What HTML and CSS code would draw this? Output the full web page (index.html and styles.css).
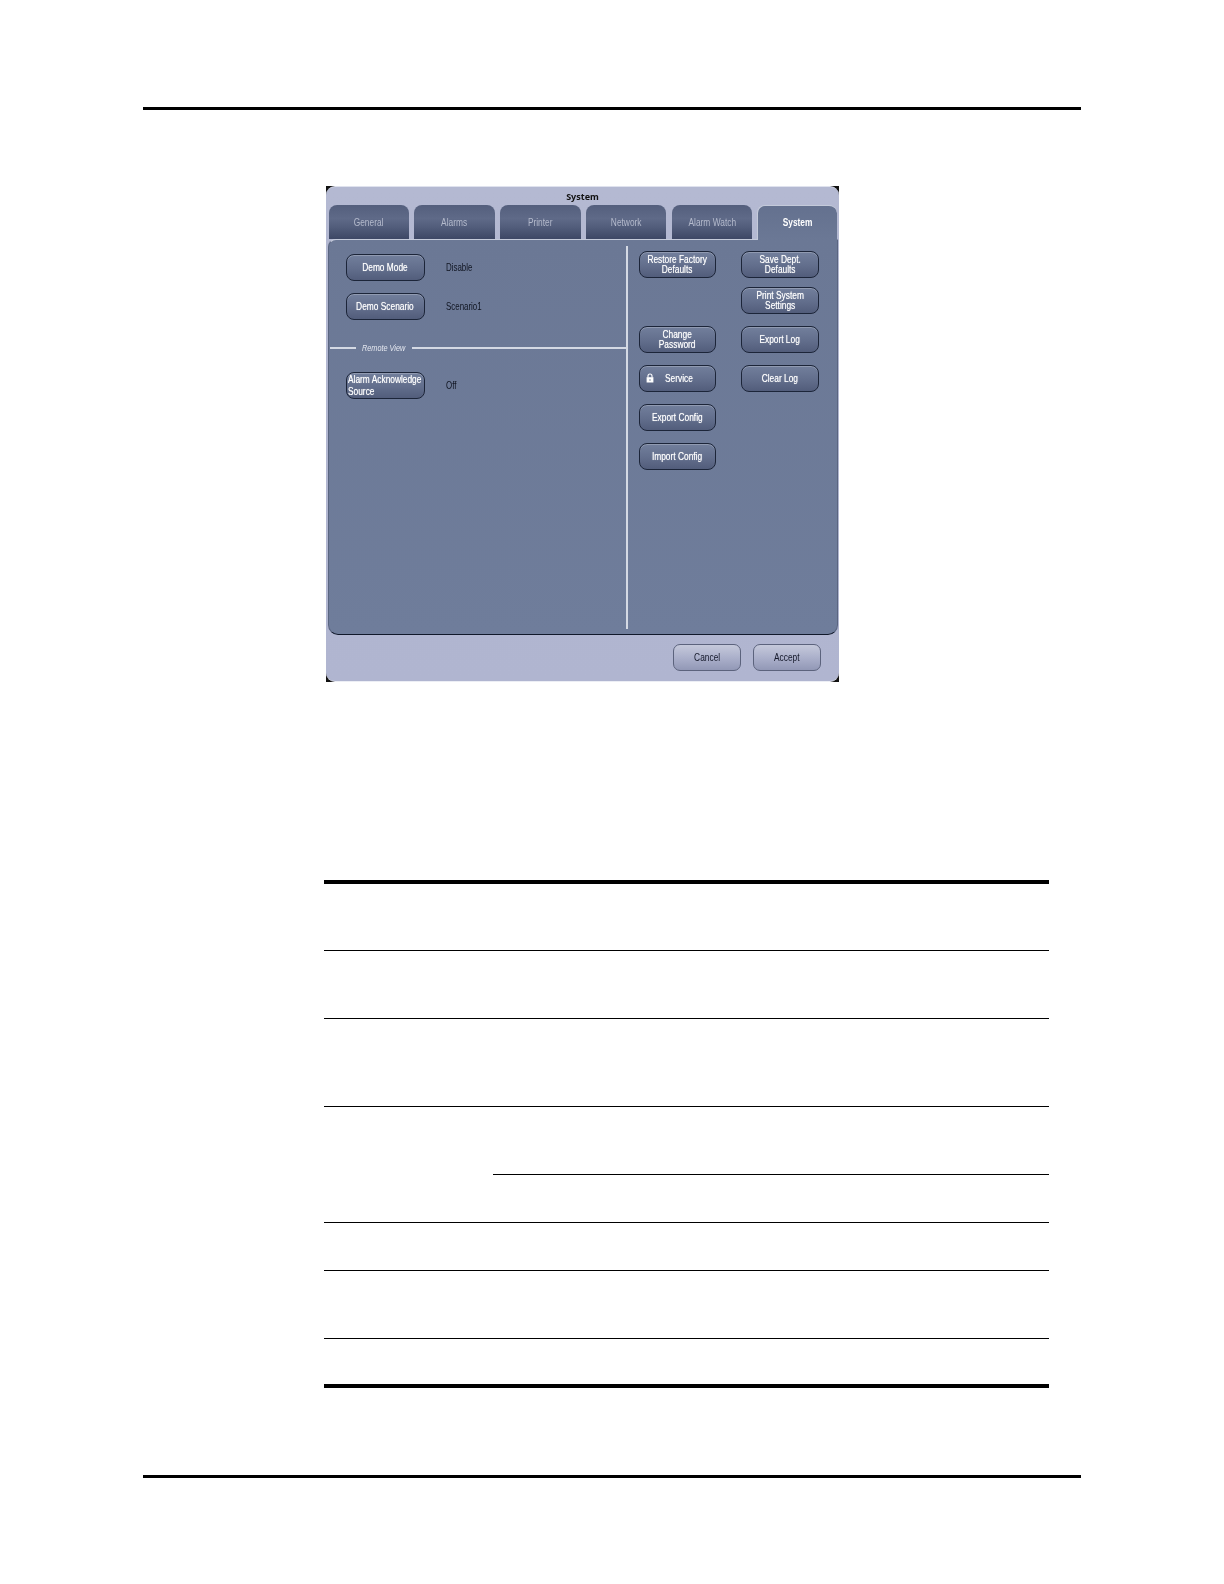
FILE: index.html
```html
<!DOCTYPE html>
<html lang="en">
<head>
  <meta charset="UTF-8">
  <title>System</title>
  <link rel="stylesheet" href="styles.css">
</head>
<body>
  <div class="page">
    <div class="page-rule"></div>
    <div class="dialog">
      <div class="dialog-inner">
        <div class="title">System</div>
        <div class="tabs">
          <div class="tab"><span class="lbl">General</span></div>
          <div class="tab"><span class="lbl">Alarms</span></div>
          <div class="tab"><span class="lbl">Printer</span></div>
          <div class="tab"><span class="lbl">Network</span></div>
          <div class="tab"><span class="lbl">Alarm Watch</span></div>
          <div class="tab active"><span class="lbl">System</span></div>
        </div>
        <div class="panel">
          <div class="left">
            <div class="setting">
              <button class="btn wide"><span class="lbl">Demo Mode</span></button>
              <span class="value">Disable</span>
            </div>
            <div class="setting">
              <button class="btn wide"><span class="lbl">Demo Scenario</span></button>
              <span class="value">Scenario1</span>
            </div>
            <div class="group-line"><span>Remote View</span></div>
            <div class="setting">
              <button class="btn wide left-text"><span class="lbl">Alarm Acknowledge<br>Source</span></button>
              <span class="value">Off</span>
            </div>
          </div>
          <div class="divider"></div>
          <div class="right">
            <div class="col">
              <button class="btn"><span class="lbl">Restore Factory<br>Defaults</span></button>
              <button class="btn gap-change"><span class="lbl">Change<br>Password</span></button>
              <button class="btn service">
                <svg class="lock" viewBox="0 0 8 10" width="8" height="10"><path d="M2 4.5V3a2 2 0 0 1 4 0v1.5" fill="none" stroke="#fff" stroke-width="1.1"/><path d="M.6 4.2h6.8v5.3H.6z" fill="#fff"/><path d="M3.6 6h.8v2h-.8z" fill="#6c7a96"/></svg>
                <span class="lbl">Service</span>
              </button>
              <button class="btn"><span class="lbl">Export Config</span></button>
              <button class="btn"><span class="lbl">Import Config</span></button>
            </div>
            <div class="col col-wide">
              <button class="btn"><span class="lbl">Save Dept.<br>Defaults</span></button>
              <button class="btn gap-print"><span class="lbl">Print System<br>Settings</span></button>
              <button class="btn"><span class="lbl">Export Log</span></button>
              <button class="btn"><span class="lbl">Clear Log</span></button>
            </div>
          </div>
        </div>
        <div class="footer">
          <button class="btn-light"><span class="lbl">Cancel</span></button>
          <button class="btn-light"><span class="lbl">Accept</span></button>
        </div>
      </div>
    </div>
    <div class="table">
      <div class="row r1"></div>
      <div class="row r2"></div>
      <div class="row r3"></div>
      <div class="row r4">
        <div class="sub"></div>
      </div>
      <div class="row r5"></div>
      <div class="row r6"></div>
      <div class="row r7"></div>
    </div>
    <div class="page-rule bottom"></div>
  </div>
</body>
</html>
```

FILE: styles.css
```css
body { background: #fff; margin: 0; font-family: "Liberation Sans", Arial, sans-serif; }
.page { width: 938px; margin-left: 143px; padding-top: 107px; }
.page-rule { height: 3px; background: #000; }
.page-rule.bottom { margin-top: 87px; }

/* condensed look of the device font */
.lbl { display: block; white-space: nowrap; transform: scaleX(.76); }

.dialog { width: 513px; height: 496px; margin: 76px 0 0 183px; background: #111; }
.dialog-inner { height: 100%; background: linear-gradient(#b4b9d2, #b0b5d0); border-radius: 9px; display: flex; flex-direction: column; box-sizing: border-box; padding: 0 1.5px 0 1.5px; border-top: 1px solid #dfe2ee; border-bottom: 1px solid #eceef5; filter: blur(.3px); }
.title { height: 18px; flex: none; text-align: center; font: bold 9px/19px "Noto Sans", sans-serif; color: #111; }

.tabs { display: flex; gap: 5.3px; height: 34px; flex: none; padding-left: 1px; }
.tab { width: 80.5px; display: flex; align-items: center; justify-content: center; background: linear-gradient(#545f7d, #5f6a88 40%, #525d7b 65%, #3d4765); border-radius: 8px 8px 0 0; color: #b4bacc; font-size: 11px; }
.tab.active { width: 79.5px; height: 35px; padding-bottom: 3px; background: linear-gradient(#64718f, #6b7895); color: #fff; font-weight: bold; border-top: 1px solid #c4cada; border-left: 1px solid #c4cada; box-sizing: border-box; position: relative; z-index: 1; }

.panel { height: 396px; flex: none; background: linear-gradient(#6b7895, #6f7d9b); border: 1px solid #5a6580; border-top-color: #c4cada; border-bottom-color: #10182a; border-radius: 8px 0 10px 10px; box-sizing: border-box; display: flex; padding: 6px 0 5px; }
.left { width: 297px; flex: none; padding-top: 8px; }
.divider { width: 2px; background: #d4d9e4; flex: none; }
.right { display: flex; padding: 4.5px 0 0 11px; gap: 25px; }
.col { display: flex; flex-direction: column; gap: 12.2px; width: 77px; }
.col-wide { width: 78.5px; }
.gap-change { margin-top: 36px; }
.gap-print { margin-top: -2.8px; }

.setting { display: flex; align-items: center; gap: 21px; padding-left: 17px; margin-bottom: 12px; }
.value { color: #101522; font-size: 11px; margin-bottom: 1.5px; transform: scaleX(.72); transform-origin: left; }
.group-line { display: flex; align-items: center; gap: 6.5px; margin: 20px 0 16px 1px; height: 16px; }
.group-line::before { content: ""; width: 26px; height: 2px; background: #d4d9e4; }
.group-line::after { content: ""; flex: 1; height: 2px; background: #d4d9e4; }
.group-line span { width: 43px; white-space: nowrap; color: #e4e7ef; font-size: 9px; font-style: italic; transform: scaleX(.81); transform-origin: left; }

.btn { height: 27px; width: 100%; padding: 0 0 1px; display: flex; align-items: center; justify-content: center; border: 1.5px solid #1c2539; border-radius: 8px; background: linear-gradient(#727f9c, #626e8c 55%, #525d7b); box-shadow: inset 0 1px 0 rgba(255,255,255,.22); color: #fff; font-family: inherit; font-size: 11px; line-height: 10px; text-align: center; flex: none; text-shadow: 0 0 1px rgba(255,255,255,.7); }
.btn.wide { width: 79px; }
.btn.left-text { justify-content: flex-start; text-align: left; padding-left: 1.5px; line-height: 12px; }
.btn.left-text .lbl { transform: scaleX(.76); transform-origin: left; }
.btn.service { justify-content: flex-start; padding-left: 6px; gap: 11.5px; }
.btn.service .lbl { transform-origin: left; }
.lock { flex: none; }

.footer { flex: 1; display: flex; justify-content: flex-end; gap: 11.6px; padding: 9px 16.3px 0 0; }
.btn-light { width: 68.4px; height: 27px; padding: 0 0 2px; display: flex; align-items: center; justify-content: center; border: 1.5px solid #5c637d; border-radius: 7px; background: linear-gradient(#c5c9db, #a9aec9 55%, #9298b6); color: #15192a; font-family: inherit; font-size: 11px; }

.table { width: 725px; margin: 198px 0 0 181px; border-top: 4px solid #000; }
.row { border-bottom: 1px solid #000; box-sizing: border-box; }
.r1 { height: 67px; }
.r2 { height: 68px; }
.r3 { height: 88px; }
.r4 { height: 116px; padding-top: 67px; }
.sub { margin-left: 169px; border-top: 1px solid #000; }
.r5 { height: 48px; }
.r6 { height: 68px; }
.r7 { height: 49px; border-bottom: 4px solid #000; }
```
